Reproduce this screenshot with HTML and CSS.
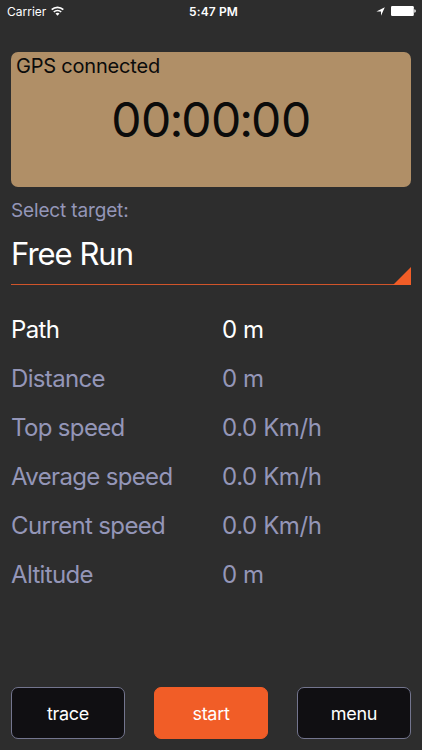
FILE: index.html
```html
<!DOCTYPE html>
<html lang="en">
<head>
    <meta charset="UTF-8">
    <meta name="viewport" content="width=device-width, initial-scale=1.0">
    <title>Run Tracker</title>
    <link rel="stylesheet" href="styles.css">
</head>
<body>
    <header class="status-bar">
        <div class="carrier">
            <span>Carrier</span>
            <svg width="13" height="10" viewBox="0 0 13 10" fill="none" stroke="#fff" stroke-width="1.7">
                <path d="M0.7 3.7a8.2 8.2 0 0 1 11.6 0"/>
                <path d="M2.8 6a5.3 5.3 0 0 1 7.4 0"/>
                <path d="M6.5 9.7L4.5 7.6a2.9 2.9 0 0 1 4 0z" fill="#fff" stroke="none"/>
            </svg>
        </div>
        <div class="clock">5:47 PM</div>
        <div class="indicators">
            <svg width="9" height="9" viewBox="0 0 9 9" fill="#fff">
                <path d="M8.8 0.2L5 8.8V4.6H0.4z"/>
            </svg>
            <svg width="25" height="10" viewBox="0 0 25 10" fill="#fff">
                <rect x="0" y="0" width="22.8" height="10" rx="1.2"/>
                <path d="M23.3 3.3q1.5 0.2 1.5 1.7t-1.5 1.7z"/>
            </svg>
        </div>
    </header>

    <main class="container">
        <section class="timer-card">
            <div class="gps">GPS connected</div>
            <div class="timer">00<span class="colon">:</span>00<span class="colon">:</span>00</div>
        </section>

        <label class="target-label">Select target:</label>
        <div class="target-select">
            <span>Free Run</span>
            <svg class="corner" width="18" height="18" viewBox="0 0 18 18">
                <path d="M18 0v18H0z" fill="#f15d27"/>
            </svg>
        </div>

        <dl class="stats">
            <div class="row active"><dt>Path</dt><dd>0 m</dd></div>
            <div class="row"><dt>Distance</dt><dd>0 m</dd></div>
            <div class="row"><dt>Top speed</dt><dd>0.0 Km/h</dd></div>
            <div class="row"><dt>Average speed</dt><dd>0.0 Km/h</dd></div>
            <div class="row"><dt>Current speed</dt><dd>0.0 Km/h</dd></div>
            <div class="row"><dt>Altitude</dt><dd>0 m</dd></div>
        </dl>
    </main>

    <footer class="actions">
        <button>trace</button>
        <button class="start">start</button>
        <button>menu</button>
    </footer>
</body>
</html>
```

FILE: styles.css
```css
* {
    box-sizing: border-box;
}
body {
    margin: 0;
    height: 750px;
    display: flex;
    flex-direction: column;
    overflow: hidden;
    background-color: #2d2d2d;
    color: #fff;
    font-family: Inter, "Liberation Sans", sans-serif;
    font-feature-settings: "calt" 0;
}
svg {
    display: block;
}
.status-bar {
    display: grid;
    grid-template-columns: 1fr auto 1fr;
    align-items: center;
    height: 22px;
    padding: 0 6px 0 7px;
    font-size: 12px;
}
.carrier {
    display: flex;
    align-items: center;
    gap: 5px;
}
.clock {
    padding-left: 4px;
    font-weight: 600;
    letter-spacing: 0.1px;
}
.indicators {
    display: flex;
    align-items: center;
    justify-content: flex-end;
    gap: 6px;
}
.container {
    flex: 1;
    padding: 30px 11px 0;
}
.timer-card {
    height: 135px;
    padding: 0 5px;
    border-radius: 7px;
    background-color: #b08f67;
    color: #0b0b0b;
}
.gps {
    font-size: 20px;
    line-height: 28px;
    letter-spacing: -0.2px;
}
.timer {
    margin-top: 10px;
    font-size: 48px;
    line-height: 60px;
    letter-spacing: -0.5px;
    text-align: center;
}
.colon {
    margin: 0 -1.5px;
}
.target-label {
    display: block;
    margin-top: 10px;
    color: #9496b8;
    font-size: 19px;
    line-height: 28px;
    letter-spacing: -0.15px;
}
.target-select {
    display: flex;
    align-items: flex-end;
    justify-content: space-between;
    height: 60px;
    border-bottom: 1px solid #d0542a;
    font-size: 31px;
    line-height: 60px;
    letter-spacing: -1px;
}
.corner {
    margin-bottom: -1px;
}
.stats {
    margin: 20px 0 0;
    color: #9496b8;
    font-size: 24px;
}
.row {
    display: grid;
    grid-template-columns: 211px 1fr;
    line-height: 49px;
}
.row.active {
    color: #fff;
}
dt {
    letter-spacing: -0.65px;
}
dd {
    margin: 0;
    letter-spacing: -0.4px;
}
.actions {
    display: flex;
    justify-content: space-between;
    padding: 0 11px 11px;
}
button {
    width: 114px;
    height: 52px;
    padding: 0;
    border: 1px solid #73758e;
    border-radius: 7px;
    background-color: #100f12;
    color: #fff;
    font-family: inherit;
    font-size: 18px;
    letter-spacing: -0.3px;
}
.start {
    border-color: #f15d27;
    background-color: #f15d27;
}
```
